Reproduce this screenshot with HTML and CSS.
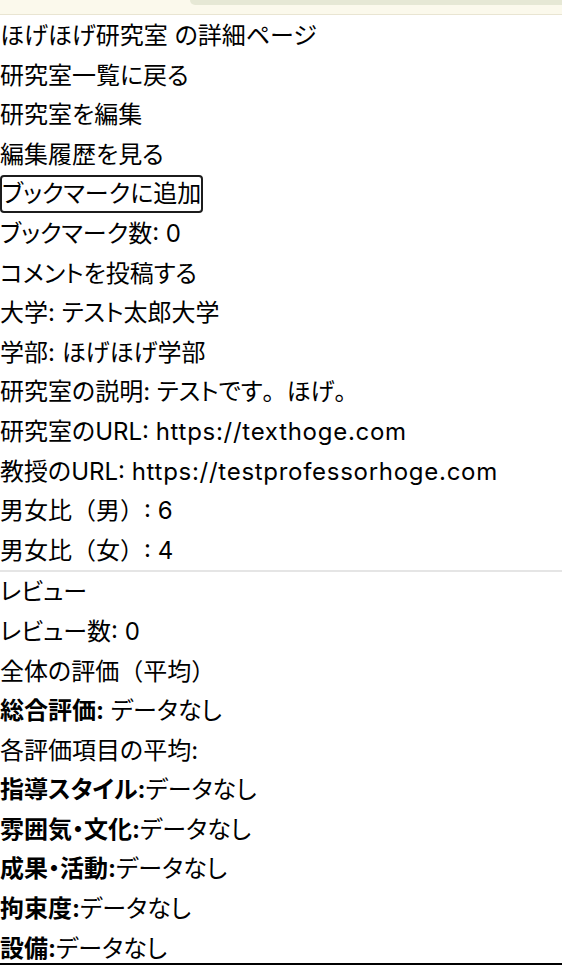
FILE: index.html
```html
<!DOCTYPE html>
<html lang="ja">
<head>
    <meta charset="UTF-8">
    <meta name="viewport" content="width=device-width, initial-scale=1.0">
    <title>ほげほげ研究室 の詳細ページ</title>
    <link rel="stylesheet" href="styles.css">
</head>
<body>
    <div class="topbar"><div class="topbar-pill"></div></div>

    <div class="lab-detail">
        <h1>ほげほげ研究室 の詳細ページ</h1>
        <a href="#">研究室一覧に戻る</a>
        <a href="#">研究室を編集</a>
        <a href="#">編集履歴を見る</a>
        <div><button class="bookmark-btn">ブックマークに追加</button></div>
        <p>ブックマーク数: 0</p>
        <a href="#">コメントを投稿する</a>
        <p>大学: テスト太郎大学</p>
        <p>学部: ほげほげ学部</p>
        <p>研究室の説明: テストです<span class="fw">。</span>ほげ<span class="fw">。</span></p>
        <p>研究室のURL: <span class="url">https://texthoge.com</span></p>
        <p>教授のURL: <span class="url">https://testprofessorhoge.com</span></p>
        <p>男女比<span class="fw">（男）</span>: 6</p>
        <p>男女比<span class="fw">（女）</span>: 4</p>
    </div>

    <hr>

    <div class="reviews">
        <h2>レビュー</h2>
        <p>レビュー数: 0</p>
        <h3>全体の評価<span class="fw">（平均）</span></h3>
        <p><strong>総合評価:</strong> データなし</p>
        <h4>各評価項目の平均:</h4>
        <p><strong>指導スタイル:</strong>データなし</p>
        <p><strong>雰囲気・文化:</strong>データなし</p>
        <p><strong>成果・活動:</strong>データなし</p>
        <p><strong>拘束度:</strong>データなし</p>
        <p><strong>設備:</strong>データなし</p>
    </div>

    <div class="bottombar"></div>
</body>
</html>
```

FILE: styles.css
```css
body { margin: 0; padding: 0; background: #ffffff; color: #000000; font-family: Inter, "Noto Sans CJK JP", sans-serif; font-size: 24px; line-height: 39.6px; font-feature-settings: "palt"; }
.topbar { height: 14px; background: #fbf9ec; border-bottom: 1px solid #e9e5d2; display: flex; justify-content: flex-end; }
.topbar-pill { width: 372px; height: 5px; background: #e6e8d5; border-bottom-left-radius: 14px; }
.lab-detail { padding-top: 1px; }
h1, h2, h3, h4, p { margin: 0; font-size: 24px; font-weight: normal; }
a { display: block; color: #000000; text-decoration: none; }
.fw { font-feature-settings: normal; }
.url { letter-spacing: 0.03em; }
.bookmark-btn { font: inherit; font-feature-settings: "palt"; line-height: 34px; padding: 0; background: #ffffff; color: #000000; border: 2px solid #1c1c1c; border-radius: 4px; cursor: pointer; }
strong { font-weight: bold; }
hr { margin: 0; border: none; border-top: 2px solid #e5e5e5; }
.bottombar { position: fixed; left: 0; right: 0; bottom: 0; height: 2px; background: #000000; }
```
